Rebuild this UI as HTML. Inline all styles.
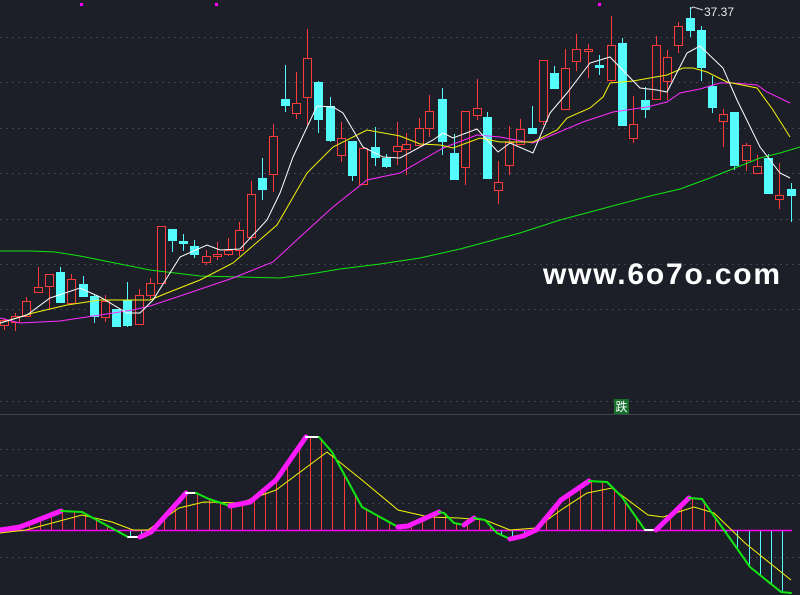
<!DOCTYPE html>
<html><head><meta charset="utf-8"><style>
html,body{margin:0;padding:0;background:#1c1f28;width:800px;height:595px;overflow:hidden}
svg{display:block}
.wm{position:absolute;left:543px;top:258px;font:bold 30px "Liberation Sans",sans-serif;color:#fff;letter-spacing:1.8px}
.lbl{position:absolute;left:704px;top:5px;font:12px "Liberation Sans",sans-serif;color:#e8e8e8}
.die{position:absolute;left:614px;top:399px;width:15px;height:15px;background:#16702a;color:#fff;font:12px "Noto Sans CJK SC",sans-serif;line-height:15px;text-align:center}
</style></head><body>
<svg id="s" width="800" height="595" xmlns="http://www.w3.org/2000/svg"></svg>
<div class="lbl">37.37</div>
<div class="wm">www.6o7o.com</div>
<div class="die">跌</div>
<script>
var s=document.getElementById('s'),h='';
[37,82,128,173,219,264,309,401,449,475,503,557].forEach(function(y){h+='<line x1="0" y1="'+y+'.5" x2="800" y2="'+y+'.5" stroke="#3d4250" stroke-dasharray="2,4"/>';});
h+='<line x1="0" y1="414.5" x2="800" y2="414.5" stroke="#3f4451"/>';
[[81,4],[216,4],[599,4]].forEach(function(p){h+='<rect x="'+(p[0]-1)+'" y="'+(p[1]-1)+'" width="3" height="3" fill="#f0f"/>';});
var C=[[4,320,325,318,330,'r'],[15,316,322,313,331,'r'],[26,301,316,297,316,'r'],[38,287,292,267,292,'r'],[49,274,286,274,310,'r'],[60,272,302,267,303,'c'],[71,279,303,274,303,'r'],[83,284,296,276,297,'c'],[94,296,316,294,323,'c'],[105,301,317,295,322,'r'],[116,309,326,309,326,'c'],[127,300,325,282,327,'c'],[139,295,324,289,324,'r'],[150,283,295,278,300,'r'],[161,226,283,226,283,'r'],[172,229,240,229,252,'c'],[183,241,243,234,251,'c'],[194,246,254,240,258,'c'],[206,256,262,250,265,'r'],[217,254,256,242,260,'r'],[228,250,254,238,256,'r'],[239,230,250,222,256,'r'],[251,194,237,181,240,'r'],[262,178,189,158,200,'c'],[273,136,174,124,192,'r'],[285,99,105,65,112,'c'],[296,103,113,72,119,'r'],[307,58,97,29,125,'r'],[318,82,119,81,133,'c'],[330,106,140,97,142,'c'],[341,138,155,122,162,'r'],[352,141,175,141,181,'c'],[363,148,184,148,184,'r'],[375,147,157,127,166,'c'],[386,158,166,154,168,'c'],[397,146,151,122,165,'r'],[406,144,149,133,175,'r'],[419,128,145,118,145,'r'],[429,111,128,95,137,'r'],[442,99,141,88,155,'c'],[454,153,179,134,180,'c'],[465,111,167,111,185,'r'],[477,108,115,79,120,'r'],[487,117,178,112,178,'c'],[498,182,190,161,204,'r'],[509,142,165,126,175,'r'],[520,129,144,119,144,'r'],[532,128,133,106,133,'c'],[543,60,121,60,125,'r'],[554,73,88,66,89,'c'],[565,68,109,49,110,'r'],[576,49,61,34,71,'r'],[588,49,51,44,78,'r'],[599,65,67,55,75,'c'],[611,45,80,16,82,'r'],[622,43,125,38,125,'c'],[633,124,138,96,143,'r'],[645,100,109,87,118,'c'],[656,45,99,36,100,'r'],[667,57,81,50,100,'r'],[678,26,45,22,53,'r'],[690,18,30,7,37,'c'],[701,30,67,26,81,'c'],[712,86,107,76,113,'c'],[723,114,121,109,147,'r'],[734,112,165,112,170,'c'],[746,145,160,143,171,'r'],[757,166,173,155,173,'r'],[768,158,193,154,194,'c'],[779,195,199,163,209,'r'],[791,189,195,183,222,'c']];
C.forEach(function(c){var x=c[0],red=c[5]=='r',col=red?'#ff3b3b':'#54fcfc';
h+='<line x1="'+(x+.5)+'" y1="'+c[3]+'" x2="'+(x+.5)+'" y2="'+c[4]+'" stroke="'+col+'"/>';
var hh=Math.max(1,c[2]-c[1]);
if(red)h+='<rect x="'+(x-3.5)+'" y="'+(c[1]+.5)+'" width="8" height="'+hh+'" fill="#1c1f28" stroke="'+col+'"/>';
else h+='<rect x="'+(x-4)+'" y="'+c[1]+'" width="9" height="'+(hh+1)+'" fill="'+col+'"/>';});
function pl(p,col,w){return '<polyline fill="none" stroke="'+col+'" stroke-width="'+(w||1)+'" points="'+p.map(function(a){return a.join(',')}).join(' ')+'"/>';}
h+=pl([[0,251],[32,251],[55,252],[80,256],[110,262],[150,270],[200,276],[280,278],[310,274],[340,269],[380,264],[420,258],[460,249],[490,241],[520,233],[560,220],[590,212],[620,204],[650,196],[680,189],[710,178],[740,166],[760,158],[780,153],[800,147]],'#12e612');
h+=pl([[0,318],[20,323],[60,321],[100,315],[133,310],[150,306],[183,295],[233,278],[273,262],[300,237],[333,207],[367,180],[400,173],[443,148],[477,135],[500,137],[533,143],[557,133],[583,122],[613,112],[647,107],[667,102],[680,93],[700,89],[720,83],[733,83],[757,85],[767,92],[790,103]],'#ff2bff');
h+=pl([[0,323],[33,313],[67,305],[100,300],[150,300],[167,293],[200,280],[233,263],[277,225],[307,173],[333,147],[367,130],[400,136],[420,144],[440,145],[453,148],[480,138],[500,142],[533,142],[557,130],[567,118],[590,108],[603,97],[610,83],[633,81],[667,75],[683,68],[693,68],[707,72],[727,82],[757,88],[773,110],[790,137]],'#f4f40a');
h+=pl([[0,323],[27,315],[50,298],[80,288],[100,297],[127,313],[140,313],[153,300],[180,257],[207,245],[220,250],[240,249],[267,220],[280,193],[293,157],[317,106],[333,107],[343,113],[363,147],[383,157],[400,158],[433,140],[443,133],[453,138],[477,129],[498,152],[510,143],[533,153],[550,113],[567,93],[590,63],[610,57],[640,88],[657,90],[667,92],[687,53],[700,46],[723,68],[737,100],[760,147],[780,173],[790,178]],'#ffffff');
h+='<polyline fill="none" stroke="#ddd" points="690,9 693,7 703,10"/>';
var D=[[0,530],[20,527],[61,511],[82,512],[128,537],[140,537],[151,532],[186,493],[196,493],[209,499],[230,506],[250,502],[276,480],[306,437],[319,437],[332,452],[362,507],[398,527],[408,526],[439,512],[444,513],[454,523],[464,525],[474,518],[485,520],[497,533],[510,539],[523,536],[536,530],[561,500],[589,481],[607,482],[622,497],[645,530],[656,530],[689,498],[702,499],[724,530],[750,567],[781,592],[791,593]];
function dy(x){for(var i=1;i<D.length;i++){if(x<=D[i][0]){var a=D[i-1],b=D[i];return a[1]+(b[1]-a[1])*(x-a[0])/(b[0]-a[0]);}}return D[D.length-1][1];}
for(var x=6;x<=792;x+=11.25){var y=dy(x),xx=Math.round(x)+.5;h+='<line x1="'+xx+'" y1="530" x2="'+xx+'" y2="'+y.toFixed(1)+'" stroke="'+(y<530?'#ff3b3b':'#54fcfc')+'"/>';}
h+='<line x1="0" y1="530.5" x2="792" y2="530.5" stroke="#ff00ff" stroke-width="1.5"/>';
h+=pl([[0,533],[26,530],[82,515],[112,522],[133,530],[148,530],[179,508],[204,502],[240,503],[276,490],[327,452],[362,480],[398,510],[429,517],[459,518],[485,520],[510,530],[536,528],[561,510],[587,493],[612,488],[648,515],[663,517],[694,507],[714,513],[745,543],[791,580]],'#f4f40a');
for(var i=1;i<D.length;i++){var a=D[i-1],b=D[i],up=b[1]<a[1];
h+='<line x1="'+a[0]+'" y1="'+a[1]+'" x2="'+b[0]+'" y2="'+b[1]+'" stroke="'+(up?'#ff1aff':(b[1]==a[1]?'#ffffff':'#12e612'))+'" stroke-width="'+(up?5:2)+'" stroke-linecap="round"/>';}
s.innerHTML=h;
</script>
</body></html>
